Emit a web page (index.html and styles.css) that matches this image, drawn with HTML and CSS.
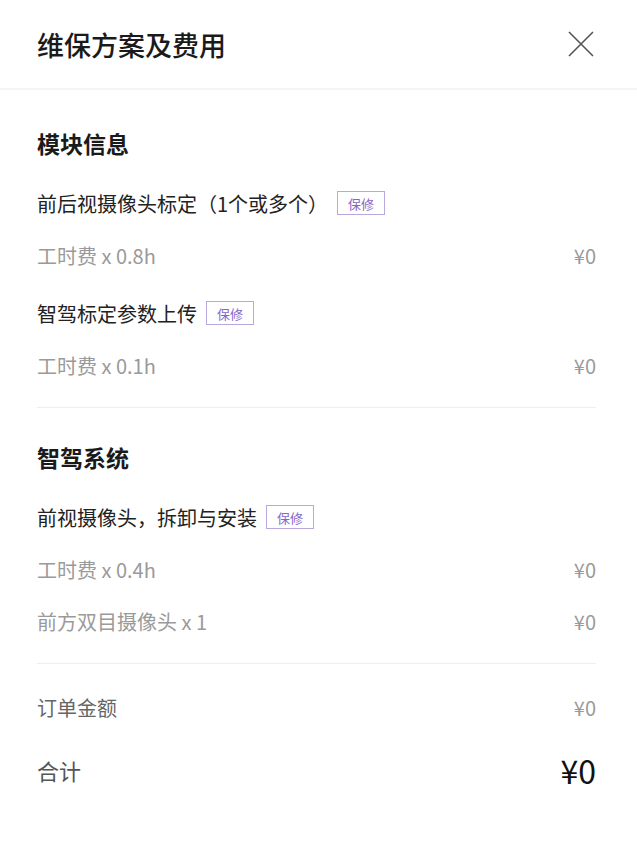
FILE: index.html
```html
<!DOCTYPE html>
<html lang="zh-CN">
<head>
  <meta charset="UTF-8" />
  <title>维保方案及费用</title>
  <link rel="stylesheet" href="styles.css">
</head>
<body>
  <div class="header">
    <h1>维保方案及费用</h1>
    <svg class="close" width="26" height="26" viewBox="0 0 26 26">
      <path d="M1 1 L25 25 M25 1 L1 25" stroke="#555" stroke-width="1.6" fill="none" />
    </svg>
  </div>

  <div class="section first">
    <div class="heading">模块信息</div>
    <div class="item">
      <div class="row name">前后视摄像头标定（1个或多个）<span class="badge">保修</span></div>
      <div class="row fee"><span>工时费 x 0.8h</span><span>¥0</span></div>
    </div>
    <div class="item">
      <div class="row name">智驾标定参数上传<span class="badge">保修</span></div>
      <div class="row fee"><span>工时费 x 0.1h</span><span>¥0</span></div>
    </div>
  </div>

  <div class="section">
    <div class="heading">智驾系统</div>
    <div class="item">
      <div class="row name">前视摄像头，拆卸与安装<span class="badge">保修</span></div>
      <div class="row fee"><span>工时费 x 0.4h</span><span>¥0</span></div>
      <div class="row fee"><span>前方双目摄像头 x 1</span><span>¥0</span></div>
    </div>
  </div>

  <div class="summary">
    <div class="row order"><span>订单金额</span><span class="price">¥0</span></div>
    <div class="row total"><span>合计</span><span class="price">¥0</span></div>
  </div>
</body>
</html>
```

FILE: styles.css
```css
body {
  margin: 0;
  background: #fff;
  font-family: "Noto Sans CJK SC", "Noto Sans", sans-serif;
  color: #222;
}
.header {
  height: 88px;
  padding: 0 43px 0 37px;
  display: flex;
  align-items: center;
  justify-content: space-between;
  border-bottom: 2px solid #f5f5f5;
}
.header h1 {
  margin: 0;
  font-size: 27px;
  font-weight: 500;
  color: #1a1a1a;
}
.close {
  display: block;
}
.section {
  margin: 0 41px 0 37px;
  padding: 23px 0 16px;
  border-bottom: 1px solid #eeeeee;
}
.section.first {
  padding-top: 27px;
}
.heading {
  height: 52px;
  display: flex;
  align-items: center;
  font-size: 23px;
  font-weight: 700;
  color: #1a1a1a;
  margin-bottom: 8px;
}
.item + .item {
  margin-top: 6px;
}
.row {
  height: 52px;
  display: flex;
  align-items: center;
  font-size: 20px;
}
.name {
  color: #222;
}
.fee {
  justify-content: space-between;
  color: #9a9a9a;
}
.badge {
  margin-left: 9px;
  height: 24px;
  padding: 0 10px;
  box-sizing: border-box;
  border: 1px solid #b8a8dc;
  color: #8466c6;
  font-size: 13px;
  display: flex;
  align-items: center;
}
.summary {
  margin: 0 41px 0 37px;
  padding-top: 17px;
}
.order {
  justify-content: space-between;
  color: #666;
}
.order .price {
  color: #9a9a9a;
}
.total {
  margin-top: 11px;
  justify-content: space-between;
  font-size: 22px;
  color: #555;
}
.total .price {
  font-size: 32px;
  color: #111;
}
```
